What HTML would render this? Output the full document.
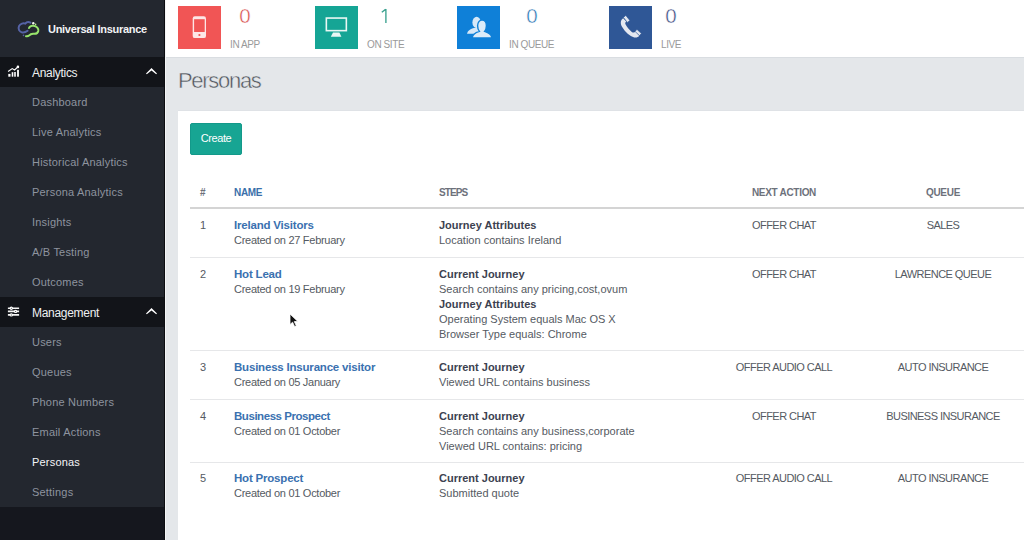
<!DOCTYPE html>
<html><head><meta charset="utf-8">
<style>
*{margin:0;padding:0;box-sizing:border-box}
html,body{width:1024px;height:540px;overflow:hidden;background:#e4e7ea;font-family:"Liberation Sans",sans-serif}
.a{position:absolute;white-space:nowrap}
#side{position:absolute;left:0;top:0;width:164px;height:540px;background:#23272f}
#sideb{position:absolute;left:164px;top:0;width:1px;height:540px;background:#0c0d11}
#sidel{position:absolute;left:165px;top:0;width:1px;height:540px;background:#f4f5f6}
.band{position:absolute;left:0;width:164px;height:30px;background:#121419}
.sec{position:absolute;left:32px;font-size:12px;color:#eef0f2;letter-spacing:-0.3px;line-height:14px}
.it{position:absolute;left:32px;font-size:11px;color:#8e949f;letter-spacing:0.2px;line-height:13px}
#hdr{position:absolute;left:166px;top:0;width:858px;height:57px;background:#fff}
.box{position:absolute;top:6px;width:43px;height:43px}
.num{position:absolute;top:5px;font-size:20.5px;line-height:22px;text-align:center;width:60px;-webkit-text-stroke:0.5px #fff}
.lbl{position:absolute;top:39px;font-size:10px;line-height:12px;color:#9a9a9a;letter-spacing:-0.4px}
#title{position:absolute;left:178px;top:68px;font-size:22px;line-height:26px;color:#51565d;letter-spacing:-1.3px;-webkit-text-stroke:0.45px #e4e7ea}
#panel{position:absolute;left:178px;top:110px;width:846px;height:430px;background:#fff;border-top:1px solid #dfe2e6}
#btn{position:absolute;left:190px;top:123px;width:52px;height:32px;background:#17a593;border:1px solid #13998a;border-radius:2px;color:#fff;font-size:11px;line-height:28px;text-align:center;letter-spacing:-0.4px}
.th{position:absolute;top:187px;font-size:10px;font-weight:bold;color:#6d717b;line-height:12px;letter-spacing:-0.3px}
.hl{position:absolute;left:190px;width:834px;background:#d4d4d4}
.c{position:absolute;font-size:11px;line-height:15px;color:#555a62}
.nm{font-weight:bold;font-size:11.5px;color:#3a71b0;letter-spacing:-0.2px}
.cr{letter-spacing:-0.28px}
.b{font-weight:bold;color:#3c4250}
.up{position:absolute;font-size:11px;line-height:15px;color:#555a62;letter-spacing:-0.55px;text-align:center;width:160px}
</style></head><body>
<div id="side"></div>
<div id="sideb"></div>
<div id="sidel"></div>
<!-- logo -->
<svg class="a" style="left:14px;top:17px" width="30" height="24" viewBox="0 0 30 24">
  <path d="M16.5 5.6 C14.5 4.6 12.5 5 11.3 6.6 C9.5 5.8 6.2 6.5 5 9.2 C3.8 12 5.3 14.8 8.2 15.4 C10 15.7 12 15 13.6 13.8" fill="none" stroke="#5663a6" stroke-width="2" stroke-linecap="round"/>
  <path d="M15 11 C15.6 9.3 17.8 8.4 19.5 8.8 C22.8 9.2 24.8 11.5 24.3 14 C23.8 16.2 21.6 17 19.6 16.8 C17.5 16.6 16 17.5 15 18.6 C14.2 19.3 13 19.4 12 19.2" fill="none" stroke="#98e46c" stroke-width="2" stroke-linecap="round"/>
  <circle cx="19.3" cy="6.2" r="1.2" fill="#f2f4ee"/><circle cx="21.6" cy="7.4" r="0.8" fill="#b8ec8a"/>
  <circle cx="9.5" cy="18.4" r="0.8" fill="#5663a6"/>
</svg>
<div class="a" style="left:48px;top:23px;font-size:11px;font-weight:bold;color:#f2f3f5;letter-spacing:-0.3px;line-height:13px">Universal Insurance</div>

<div class="band" style="top:57px"></div>
<svg class="a" style="left:7px;top:65px" width="13" height="12" viewBox="0 0 13 12">
  <rect x="1.3" y="8.9" width="2.2" height="2.8" fill="#fff"/><rect x="4.7" y="7.2" width="1.6" height="4.5" fill="#fff"/><rect x="7.2" y="7" width="1.6" height="4.7" fill="#fff"/><rect x="10.1" y="4.8" width="1.8" height="6.9" fill="#fff"/>
  <path d="M1.1 6.4 L5.2 3.6 L7.6 5 L10.9 1.9" fill="none" stroke="#fff" stroke-width="1.2"/>
  <circle cx="10.9" cy="1.9" r="1.3" fill="#fff"/>
</svg>
<div class="sec" style="top:66px">Analytics</div>
<svg class="a" style="left:146px;top:68px" width="11" height="7" viewBox="0 0 11 7"><path d="M0 5.6 L5.5 0.1 L11 5.6 L10.2 6.3 L5.5 2.5 L0.8 6.3 Z" fill="#fff"/></svg>
<div class="it" style="top:96px">Dashboard</div>
<div class="it" style="top:126px">Live Analytics</div>
<div class="it" style="top:156px">Historical Analytics</div>
<div class="it" style="top:186px">Persona Analytics</div>
<div class="it" style="top:216px">Insights</div>
<div class="it" style="top:246px">A/B Testing</div>
<div class="it" style="top:276px">Outcomes</div>

<div class="band" style="top:297px"></div>
<svg class="a" style="left:7px;top:306px" width="13" height="12" viewBox="0 0 13 12">
  <path d="M0.9 2.2 H12.1 M0.9 5.4 H12.1 M0.9 8.9 H12.1" stroke="#f4f4f4" stroke-width="1.6"/>
  <circle cx="4.3" cy="2.2" r="1.7" fill="#fff"/><circle cx="8.6" cy="5.4" r="1.7" fill="#fff"/><circle cx="4.3" cy="8.9" r="1.7" fill="#fff"/>
  <circle cx="4.3" cy="2.2" r="0.5" fill="#333"/><circle cx="8.6" cy="5.4" r="0.5" fill="#333"/><circle cx="4.3" cy="8.9" r="0.5" fill="#333"/>
</svg>
<div class="sec" style="top:306px">Management</div>
<svg class="a" style="left:146px;top:308px" width="11" height="7" viewBox="0 0 11 7"><path d="M0 5.6 L5.5 0.1 L11 5.6 L10.2 6.3 L5.5 2.5 L0.8 6.3 Z" fill="#fff"/></svg>
<div class="it" style="top:336px">Users</div>
<div class="it" style="top:366px">Queues</div>
<div class="it" style="top:396px">Phone Numbers</div>
<div class="it" style="top:426px">Email Actions</div>
<div class="it" style="top:456px;color:#f4f5f7">Personas</div>
<div class="it" style="top:486px">Settings</div>
<div class="a" style="left:0;top:507px;width:164px;height:33px;background:#15171e"></div>

<!-- header -->
<div id="hdr"></div>
<div class="box" style="left:178px;background:#f15555"></div>
<svg class="a" style="left:192px;top:16px" width="15" height="23" viewBox="0 0 15 23">
  <rect x="0.7" y="0.2" width="13.3" height="21.9" rx="2.2" fill="#fde6e6"/>
  <rect x="2.1" y="3.2" width="10.6" height="12.8" fill="#f15555"/>
  <circle cx="7.4" cy="19" r="1.1" fill="#f15555"/>
</svg>
<div class="num" style="left:215px;color:#d4423f">0</div>
<div class="lbl" style="left:230px">IN APP</div>

<div class="box" style="left:315px;background:#15a595"></div>
<svg class="a" style="left:325px;top:17px" width="23" height="21" viewBox="0 0 23 21">
  <rect x="1.35" y="1.05" width="20" height="12.6" fill="none" stroke="#eaf7f4" stroke-width="1.6"/>
  <path d="M8 15.6 H14.4 L16.4 19.7 H5.8 Z" fill="#eaf7f4"/>
</svg>
<svg class="a" style="left:378px;top:6px" width="12" height="20" viewBox="0 0 12 20"><path d="M3.8 6.3 L7.6 3.4 M7.9 3.1 V17.1" fill="none" stroke="#3aa18f" stroke-width="1.35"/></svg>
<div class="lbl" style="left:367px">ON SITE</div>

<div class="box" style="left:457px;background:#0f80d8"></div>
<svg class="a" style="left:462px;top:10px" width="34" height="34" viewBox="0 0 34 34">
  <ellipse cx="14.6" cy="12.4" rx="4.2" ry="5.6" fill="#d6e8f8"/>
  <path d="M5 23.8 C5.5 20.5 9 18.8 12 18 L16 17 L19 22 L18 23.8 Z" fill="#d6e8f8"/>
  <path d="M10.2 28 C10.5 24 14.5 22.3 17.4 21.4 C16.2 20 15.6 18 15.6 15.8 C15.6 12.3 17.6 10 20 10 C22.5 10 24.4 12.3 24.4 15.8 C24.4 18 23.8 20 22.6 21.4 C25.5 22.3 29.6 24 29.8 28 Z" fill="#dcecf9" stroke="#0f80d8" stroke-width="1.4"/>
</svg>
<div class="num" style="left:502px;color:#1f70b0">0</div>
<div class="lbl" style="left:509px">IN QUEUE</div>

<div class="box" style="left:609px;background:#2f5796"></div>
<svg class="a" style="left:618px;top:14px" width="26" height="26" viewBox="0 0 26 26">
  <path d="M5.2 4.2 C2.6 5.8 2 9.4 4 12.8 C7.5 18.6 11.6 22 16.2 23.4 C18.4 24 20.2 23 21.4 21.8 L17.6 17.8 C16.4 18.8 15 18.8 13.8 18 C11.4 16.2 9 13.2 7.6 10.6 C7 9.4 7.2 8.4 8.2 7.6 Z" fill="#e4e8f0"/>
  <path d="M5.4 3.4 L7.8 1.4 L11.8 6.4 L9.4 8.4 Z" fill="#e4e8f0" stroke="#2f5796" stroke-width="0.6"/>
  <path d="M17 17.4 L19 15.4 L23.4 19.6 L21.4 21.6 Z" fill="#e4e8f0" stroke="#2f5796" stroke-width="0.6"/>
</svg>
<div class="num" style="left:641px;color:#33437a">0</div>
<div class="lbl" style="left:661px">LIVE</div>

<div class="a" style="left:166px;top:57px;width:858px;height:1px;background:#d9dde1"></div>
<div id="title">Personas</div>

<div id="panel"></div>
<div id="btn">Create</div>

<div class="th" style="left:200px">#</div>
<div class="th" style="left:234px;color:#3a6faa">NAME</div>
<div class="th" style="left:439px;letter-spacing:-0.9px">STEPS</div>
<div class="th" style="left:704px;width:160px;text-align:center">NEXT ACTION</div>
<div class="th" style="left:863px;width:160px;text-align:center">QUEUE</div>
<div class="hl" style="top:207px;height:2px"></div>

<!-- row 1 -->
<div class="c" style="left:200px;top:218px">1</div>
<div class="c" style="left:234px;top:218px"><span class="nm">Ireland Visitors</span><br><span class="cr">Created on 27 February</span></div>
<div class="c" style="left:439px;top:218px"><span class="b">Journey Attributes</span><br>Location contains Ireland</div>
<div class="up" style="left:704px;top:218px">OFFER CHAT</div>
<div class="up" style="left:863px;top:218px">SALES</div>
<div class="hl" style="top:257px;height:1px;background:#e6e7e9"></div>

<!-- row 2 -->
<div class="c" style="left:200px;top:267px">2</div>
<div class="c" style="left:234px;top:267px"><span class="nm">Hot Lead</span><br><span class="cr">Created on 19 February</span></div>
<div class="c" style="left:439px;top:267px"><span class="b">Current Journey</span><br>Search contains any pricing,cost,ovum<br><span class="b">Journey Attributes</span><br>Operating System equals Mac OS X<br>Browser Type equals: Chrome</div>
<div class="up" style="left:704px;top:267px">OFFER CHAT</div>
<div class="up" style="left:863px;top:267px">LAWRENCE QUEUE</div>
<div class="hl" style="top:350px;height:1px;background:#e6e7e9"></div>

<!-- row 3 -->
<div class="c" style="left:200px;top:360px">3</div>
<div class="c" style="left:234px;top:360px"><span class="nm">Business Insurance visitor</span><br><span class="cr">Created on 05 January</span></div>
<div class="c" style="left:439px;top:360px"><span class="b">Current Journey</span><br>Viewed URL contains business</div>
<div class="up" style="left:704px;top:360px">OFFER AUDIO CALL</div>
<div class="up" style="left:863px;top:360px">AUTO INSURANCE</div>
<div class="hl" style="top:399px;height:1px;background:#e6e7e9"></div>

<!-- row 4 -->
<div class="c" style="left:200px;top:409px">4</div>
<div class="c" style="left:234px;top:409px"><span class="nm" style="letter-spacing:-0.45px">Business Prospect</span><br><span class="cr">Created on 01 October</span></div>
<div class="c" style="left:439px;top:409px"><span class="b">Current Journey</span><br>Search contains any business,corporate<br>Viewed URL contains: pricing</div>
<div class="up" style="left:704px;top:409px">OFFER CHAT</div>
<div class="up" style="left:863px;top:409px">BUSINESS INSURANCE</div>
<div class="hl" style="top:462px;height:1px;background:#e6e7e9"></div>

<!-- row 5 -->
<div class="c" style="left:200px;top:471px">5</div>
<div class="c" style="left:234px;top:471px"><span class="nm">Hot Prospect</span><br><span class="cr">Created on 01 October</span></div>
<div class="c" style="left:439px;top:471px"><span class="b">Current Journey</span><br>Submitted quote</div>
<div class="up" style="left:704px;top:471px">OFFER AUDIO CALL</div>
<div class="up" style="left:863px;top:471px">AUTO INSURANCE</div>

<!-- cursor -->
<svg class="a" style="left:289px;top:313px" width="10" height="15" viewBox="0 0 10 15">
  <path d="M1 1 L1 11.5 L3.6 9.2 L5.6 13.6 L7.3 12.8 L5.3 8.6 L8.8 8.4 Z" fill="#111" stroke="#fff" stroke-width="0.8"/>
</svg>
</body></html>
